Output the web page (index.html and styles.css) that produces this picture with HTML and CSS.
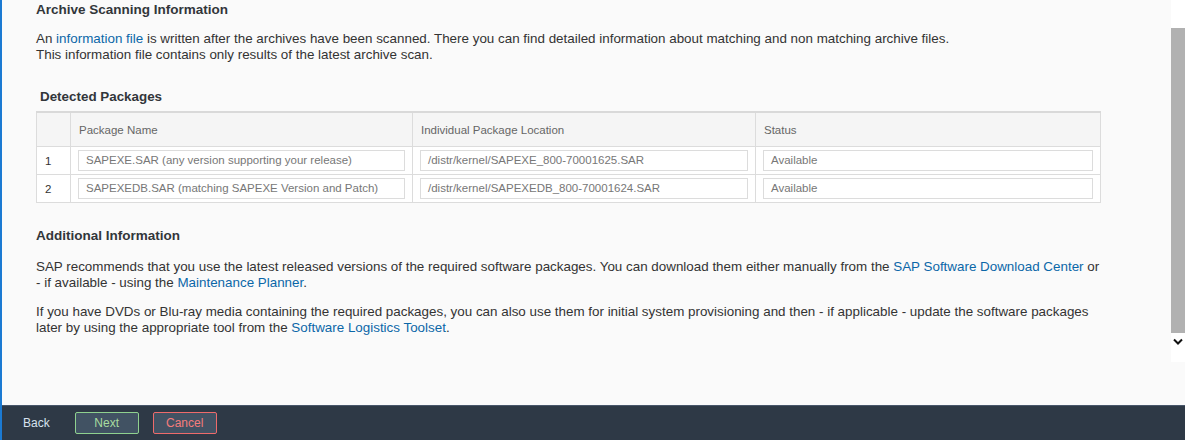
FILE: index.html
```html
<!DOCTYPE html>
<html>
<head>
<meta charset="utf-8">
<link rel="stylesheet" href="styles.css">
</head>
<body>
<div class="app">
  <div class="main">
    <div class="content">
      <h2 class="title">Archive Scanning Information</h2>
      <p class="para first">An <a class="link">information file</a> is written after the archives have been scanned. There you can find detailed information about matching and non matching archive files.<br>This information file contains only results of the latest archive scan.</p>
      <h3 class="subtitle">Detected Packages</h3>
      <table class="grid">
        <colgroup>
          <col class="c-num"><col class="c-name"><col class="c-loc"><col class="c-status">
        </colgroup>
        <thead>
          <tr><th></th><th>Package Name</th><th>Individual Package Location</th><th>Status</th></tr>
        </thead>
        <tbody>
          <tr>
            <td class="num">1</td>
            <td><div class="field">SAPEXE.SAR (any version supporting your release)</div></td>
            <td><div class="field">/distr/kernel/SAPEXE_800-70001625.SAR</div></td>
            <td><div class="field">Available</div></td>
          </tr>
          <tr>
            <td class="num">2</td>
            <td><div class="field">SAPEXEDB.SAR (matching SAPEXE Version and Patch)</div></td>
            <td><div class="field">/distr/kernel/SAPEXEDB_800-70001624.SAR</div></td>
            <td><div class="field">Available</div></td>
          </tr>
        </tbody>
      </table>
      <h2 class="title add">Additional Information</h2>
      <p class="para third">SAP recommends that you use the latest released versions of the required software packages. You can download them either manually from the <a class="link">SAP Software Download Center</a> or<br>- if available - using the <a class="link">Maintenance Planner</a>.</p>
      <p class="para second">If you have DVDs or Blu-ray media containing the required packages, you can also use them for initial system provisioning and then - if applicable - update the software packages<br>later by using the appropriate tool from the <a class="link">Software Logistics Toolset</a>.</p>
    </div>
    <div class="scrollbar">
      <div class="sb-top"></div>
      <div class="sb-thumb"></div>
      <div class="sb-arrow">
        <svg width="10" height="7" viewBox="0 0 10 7"><path d="M1 1.5 L5 5.5 L9 1.5" fill="none" stroke="#111" stroke-width="2"/></svg>
      </div>
    </div>
  </div>
  <div class="footer">
    <span class="back">Back</span>
    <span class="btn next">Next</span>
    <span class="btn cancel">Cancel</span>
  </div>
</div>
</body>
</html>
```
FILE: styles.css
```css
html, body {
  margin: 0;
  padding: 0;
}
body {
  width: 1185px;
  height: 440px;
  overflow: hidden;
  background: #fafafa;
  font-family: "Liberation Sans", Arial, sans-serif;
  color: #333;
}
.app {
  display: flex;
  flex-direction: column;
  height: 440px;
  border-left: 2px solid #1b7ad2;
  box-sizing: border-box;
}
.main {
  flex: 1;
  display: flex;
  min-height: 0;
}
.content {
  flex: 1;
  padding-left: 34px;
  padding-right: 70px;
}
.title {
  margin: 1px 0 0;
  font-size: 13.5px;
  line-height: 18px;
  font-weight: bold;
  color: #32363a;
}
.title.add {
  margin-top: 24px;
}
.para {
  margin: 11px 0 0;
  font-size: 13.4px;
  line-height: 16px;
  color: #333;
}
.para.first {
  margin-top: 12px;
}
.para.third {
  margin-top: 14px;
}
.para.second {
  margin-top: 13px;
}
.link {
  color: #0b67a8;
}
.subtitle {
  margin: 25px 0 0 4px;
  font-size: 13.4px;
  line-height: 18px;
  font-weight: bold;
  color: #32363a;
}
.grid {
  margin-top: 5px;
  border-collapse: collapse;
  width: 1064px;
  table-layout: fixed;
  font-size: 11.5px;
}
.c-num { width: 34px; }
.c-name { width: 342px; }
.c-loc { width: 343px; }
.c-status { width: 345px; }
.grid th, .grid td {
  border: 1px solid #dcdcdc;
  padding: 0;
}
.grid th {
  height: 33px;
  background: #f5f5f5;
  text-align: left;
  font-weight: normal;
  color: #666;
  padding-left: 8px;
  border-top: 2px solid #d9d9d9;
}
.grid td {
  height: 27px;
  background: #fff;
  padding: 0 7px 0 7px;
}
.grid td.num {
  padding-left: 8px;
  color: #333;
}
.field {
  height: 19px;
  border: 1px solid #dcdcdc;
  background: #fff;
  color: #777;
  line-height: 19px;
  padding-left: 7px;
  white-space: nowrap;
  overflow: hidden;
}
.scrollbar {
  width: 14px;
  height: 362px;
  background: #fff;
  display: flex;
  flex-direction: column;
}
.sb-top {
  height: 28px;
}
.sb-thumb {
  height: 305px;
  background: #b1b1b1;
}
.sb-arrow {
  height: 29px;
  display: flex;
  justify-content: center;
  padding-top: 5px;
  box-sizing: border-box;
}
.footer {
  height: 35px;
  background: #2e3946;
  border-top: 1px solid #48566a;
  box-sizing: border-box;
  display: flex;
  align-items: center;
  font-size: 12px;
}
.back {
  color: #d6e2ee;
  margin-left: 21px;
  margin-right: 25px;
}
.btn {
  width: 64px;
  height: 22px;
  box-sizing: border-box;
  border: 1px solid;
  border-radius: 2px;
  background: #415263;
  display: flex;
  align-items: center;
  justify-content: center;
}
.next {
  border-color: #8fd18f;
  color: #a8dca0;
  margin-right: 14px;
}
.cancel {
  border-color: #ee6b6b;
  color: #f47c7c;
}
```
